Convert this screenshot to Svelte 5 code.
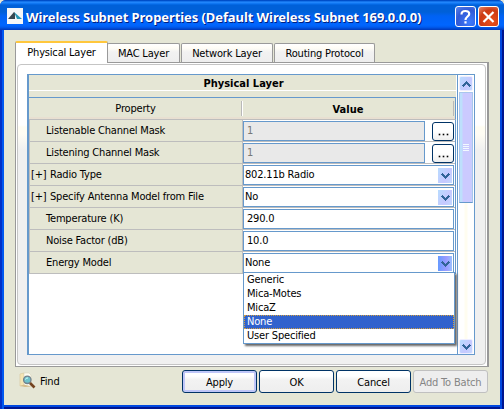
<script>
  const tabs = [
    { label: 'MAC Layer', w: 73 },
    { label: 'Network Layer', w: 92 },
    { label: 'Routing Protocol', w: 101 }
  ];
  const rows = [
    { label: 'Listenable Channel Mask', value: '1', kind: 'mask' },
    { label: 'Listening Channel Mask', value: '1', kind: 'mask' },
    { label: 'Radio Type', value: '802.11b Radio', kind: 'combo', expand: true },
    { label: 'Specify Antenna Model from File', value: 'No', kind: 'combo', expand: true },
    { label: 'Temperature (K)', value: '290.0', kind: 'text' },
    { label: 'Noise Factor (dB)', value: '10.0', kind: 'text' },
    { label: 'Energy Model', value: 'None', kind: 'combo', open: true }
  ];
  const options = ['Generic', 'Mica-Motes', 'MicaZ', 'None', 'User Specified'];
</script>

{#snippet chevron(up)}
  <svg width="9" height="6" viewBox="0 0 9 6" shape-rendering="crispEdges">
    <path d={up ? 'M4 0h1v1h1v1h1v1h1v1h1v1h-1v1h-1v-1h-1v-1h-1v-1h-1v1h-1v1h-1v1h-1v-1h-1v-1h1v-1h1v-1h1v-1h1z' : 'M4 6h1v-1h1v-1h1v-1h1v-1h1v-1h-1v-1h-1v1h-1v1h-1v1h-1v-1h-1v-1h-1v-1h-1v1h-1v1h1v1h1v1h1v1h1z'} fill="#316498" />
  </svg>
{/snippet}

<div class="window">
  <header>
    <svg class="logo" width="16" height="16" viewBox="0 0 16 16">
      <rect width="16" height="16" fill="#f4f6f8" />
      <path d="M1 11L7 4L8 5V11Z" fill="#354650" />
      <path d="M7 4L15 11H10Z" fill="#2696b4" />
    </svg>
    <h1>Wireless Subnet Properties (Default Wireless Subnet 169.0.0.0)</h1>
    <div class="controls">
      <span class="ctl help">
        <svg width="17" height="18" viewBox="0 0 17 18" fill="none" stroke="#fff" stroke-width="2.2"><path d="M4.5 6.5C4.5 3.5 6 3 8.3 3C11 3 12.2 4.2 12.2 6C12.2 8.5 8.5 8.6 8.5 12" /><path d="M8.5 13.2V15.5" /></svg>
      </span>
      <span class="ctl close">
        <svg width="17" height="18" viewBox="0 0 17 18" fill="none" stroke="#fff" stroke-width="2.2"><path d="M3.5 4L13.5 14M13.5 4L3.5 14" /></svg>
      </span>
    </div>
  </header>

  <main>
    <nav>
      <div class="tab active"><span>Physical Layer</span></div>
      {#each tabs as t}
        <div class="tab" style="width:{t.w}px"><span>{t.label}</span></div>
      {/each}
    </nav>

    <section class="panel">
      <div class="inner">
        <div class="view">
          <div class="content">
            <div class="caption">Physical Layer</div>
            <div class="grid">
              <div class="head"><span class="hp">Property</span><span class="hv">Value</span></div>
              {#each rows as r}
                <div class="row">
                  <div class="label" class:expand={r.expand}>{#if r.expand}<i>[+]</i>{/if}<span>{r.label}</span></div>
                  <div class="cell">
                    <div class="field {r.kind}">
                      <span>{r.value}</span>
                      {#if r.kind === 'combo'}
                        <b class="arrow" class:hot={r.open}>{@render chevron(false)}</b>
                      {/if}
                    </div>
                    {#if r.kind === 'mask'}<button class="dots" aria-label="Edit mask"><u></u><u></u><u></u></button>{/if}
                    {#if r.open}
                      <ul class="menu">
                        {#each options as o}<li class:sel={o === r.value}>{o}</li>{/each}
                      </ul>
                    {/if}
                  </div>
                </div>
              {/each}
            </div>
          </div>
          <div class="scroll">
            <div class="sb up">{@render chevron(true)}</div>
            <div class="thumb"><s></s><s></s><s></s><s></s></div>
            <div class="track"></div>
            <div class="sb down">{@render chevron(false)}</div>
          </div>
        </div>
      </div>
    </section>

    <footer>
      <svg class="find" width="17" height="17" viewBox="0 0 17 17">
        <path d="M1 2L5 1L6 13L1 14Z" fill="#f5e5b4" stroke="#d8c79b" stroke-width=".6" />
        <path d="M5 1H10L12 3V14H5Z" fill="#fffdf2" stroke="#d9d3b9" stroke-width=".6" />
        <path d="M1 14L5 12.5L12 14.5L6 15Z" fill="#d7bd8b" />
        <circle cx="8.3" cy="7.8" r="3.7" fill="#6fc3cb" stroke="#73818b" stroke-width="1.3" />
        <path d="M6.5 7.5Q7 5.5 9 6" stroke="#d8ffff" fill="none" />
        <path d="M11 11L15.5 15.5" stroke="#74431f" stroke-width="2.6" />
      </svg>
      <span class="findlabel">Find</span>
      <div class="buttons">
        <button class="btn default">Apply</button>
        <button class="btn">OK</button>
        <button class="btn">Cancel</button>
        <button class="btn off" disabled>Add To Batch</button>
      </div>
    </footer>
  </main>
</div>

<style>
  :global(body) { margin: 0; background: #e5e6d5; overflow: hidden; }
  * { box-sizing: border-box; }
  svg { display: block; flex: none; }
  button { font: inherit; padding: 0; margin: 0; }
  .window {
    width: 504px; height: 409px; display: flex; flex-direction: column; overflow: hidden;
    font: 11px/14px "DejaVu Sans Condensed", "DejaVu Sans", sans-serif; font-stretch: condensed;
    letter-spacing: -0.18px; color: #000; white-space: nowrap;
    border-radius: 6px 6px 0 0; background: #0037c8;
  }
  header {
    height: 30px; flex: none; display: flex; align-items: flex-start; padding: 8px 5px 0 7px;
    background: linear-gradient(#0044bd 0, #0058d4 1px, #288cff 2px, #0870ee 4px, #0060d8 5px, #0060d8 12px, #0062f4 16px, #0066ff 25px, #005cf0 27px, #0038b8 30px);
  }
  h1 {
    margin: 0 0 0 3px; font: bold 13px/18px "Noto Sans", sans-serif; color: #fff;
    letter-spacing: -0.08px; text-shadow: 1px 1px 0 #002080;
  }
  .controls { margin-left: auto; display: flex; gap: 2px; margin-top: -2px; }
  .ctl { width: 21px; height: 21px; border: 1px solid #fff; border-radius: 3px; display: flex; align-items: center; justify-content: center; }
  .help { background: radial-gradient(circle at 70% 80%, #3c7cff, #3159d5 60%, #5a84ed); }
  .close { background: radial-gradient(circle at 65% 75%, #e8501c, #cc3a14 60%, #e88a6c); }
  main {
    flex: 1; min-height: 0; padding: 11px 15px 0; background: #e5e6d5;
    box-shadow: inset 2px 0 #0030c8, inset 4px 0 #0058f0, inset -2px 0 #001590, inset -4px 0 #0048e0, inset 0 -2px #001590, inset 0 -4px #0048e0;
  }
  nav { height: 21px; display: flex; align-items: flex-end; gap: 1px; }
  .tab {
    height: 19px; border: 1px solid #9a9a9a; border-bottom: 0; border-radius: 2px 2px 0 0;
    background: linear-gradient(#fff, #fffdf6 4px, #f2f2f2 8px, #eee); text-align: center; line-height: 20px;
  }
  .tab.active {
    width: 93px; height: 22px; margin: 0 -2px -1px 0; border-top: 2px solid #ffc73c; background: #fff; line-height: 20px; z-index: 1;
  }
  .panel { width: 474px; height: 305px; border: 1px solid #999; border-right-width: 2px; padding: 1px; background: #fff; }
  .inner {
    height: 301px; border: 1px solid #c5c5c5; border-radius: 4px; padding: 9px 0 0 9px;
    background: linear-gradient(#fff 60px, #fffdf2 62px, #fffdf4 69px, #f0f0f0 85px);
  }
  .view { width: 448px; height: 281px; border: 1px solid #6699cc; border-left-width: 2px; background: #fff; display: flex; }
  .content { width: 428px; border-right: 1px solid #fff; }
  .caption { height: 16px; background: #e5e6d5; border-bottom: 1px solid #fff; text-align: center; font-weight: bold; line-height: 18px; letter-spacing: 0; padding-left: 2px; }
  .grid { border-top: 6px solid #e5e6d5; }
  .head { height: 23px; display: flex; border-top: 1px solid #6699cc; border-bottom: 1px solid #bdbdbd; border-right: 1px solid #6699cc; background: linear-gradient(#e5e6d5 19px, #ead8cd 20px, #e5e6d5 21px); text-align: center; line-height: 22px; }
  .hp { width: 213px; }
  .hv { flex: 1; font-weight: bold; height: 15px; margin-top: 3px; line-height: 17px; border-left: 1px solid #fff; box-shadow: -1px 0 #b8b8b8; border-right: 1px solid #b8b8b8; margin-right: 1px; letter-spacing: 0; }
  .row { height: 22px; display: flex; border-right: 1px solid #6699cc; }
  .label { width: 214px; background: #e5e6d5; border: solid #bdbdbd; border-width: 0 1px 1px; padding-left: 16px; line-height: 21px; display: flex; }
  .label.expand { padding-left: 1px; }
  .label i { font-style: normal; width: 19px; }
  .cell { flex: 1; position: relative; display: flex; border-bottom: 1px solid #bdbdbd; height: 22px; }
  .field { height: 20px; flex: 1; margin-right: 1px; border: 1px solid #6699cc; background: #fff; display: flex; padding-left: 3px; line-height: 18px; }
  .field.combo { padding-left: 1px; justify-content: space-between; margin-top: 1px; }
  .field.text { margin-top: 1px; }
  .field.mask { flex: none; width: 182px; margin-right: 7px; background: #e9e9e9; color: #777; margin-top: 1px; }
  .arrow { width: 14px; height: 15px; margin: 2px 1px 0; background: linear-gradient(120deg, #b8dcff, #c6c8ff 60%, #c2d8ff); display: grid; place-items: center; }
  .arrow.hot { background: linear-gradient(90deg, #669aff, #9b9bff 60%, #99c0ff); }
  .dots { width: 22px; height: 19px; margin-top: 2px; border: 1px solid #003366; border-radius: 3px; background: linear-gradient(#fff 8px, #eee); display: flex; gap: 3px; justify-content: center; align-items: flex-end; padding-bottom: 5px; }
  .dots u { width: 1px; height: 1px; background: #000; box-shadow: 0 0 0 .3px #000; }
  .menu {
    position: absolute; left: 0; top: 20px; width: 212px; height: 72px; margin: 0; padding: 0; list-style: none;
    background: #fff; border: 1px solid #6699cc; box-shadow: 2px 2px 2px #666; z-index: 2;
  }
  .menu li { height: 14px; line-height: 14px; padding-left: 3px; }
  .menu .sel { background: #3162cd; color: #fff; outline: 1px dotted #d6a13c; outline-offset: -1px; }
  .scroll { flex: 1; display: flex; flex-direction: column; padding: 1px 1px 0; border-left: 1px solid #6699cc; background: linear-gradient(90deg, #fff 6px, #fffdf0 7px, #fffdf0 9px, #fff 10px); }
  .sb { height: 15px; flex: none; background: linear-gradient(120deg, #b8dcff, #c6c8ff 60%, #c2d8ff); display: grid; place-items: center; border: 1px solid #eef; border-radius: 2px; }
  .thumb { height: 111px; margin-top: 1px; border: 1px solid #a9c6ed; border-bottom-color: #6699cc; background: linear-gradient(90deg, #bde0fc 2px, #cbcaff 3px, #cbcaff 11px, #c1dafa 13px); display: flex; flex-direction: column; gap: 1px; align-items: center; justify-content: center; }
  .thumb s { width: 6px; height: 1px; background: #f2faff; }
  .track { flex: 1; }
  footer { display: flex; align-items: flex-start; height: 38px; width: 474px; padding: 3px 1px 0 4px; }
  .find { margin-top: 2px; }
  .findlabel { margin: 5px 0 0 4px; }
  .buttons { margin-left: auto; display: flex; gap: 2px; }
  .btn { width: 75px; height: 23px; border: 1px solid #003366; border-radius: 3px; background: linear-gradient(#fff 5px, #f2f2f2 9px, #eee); letter-spacing: inherit; white-space: nowrap; color: #000; padding-top: 2px; }
  .btn.default { box-shadow: inset 0 0 0 2px #bfc6f8; }
  .btn.off { border-color: #c0c0c0; color: #858585; background: #eeeeee; }
</style>
